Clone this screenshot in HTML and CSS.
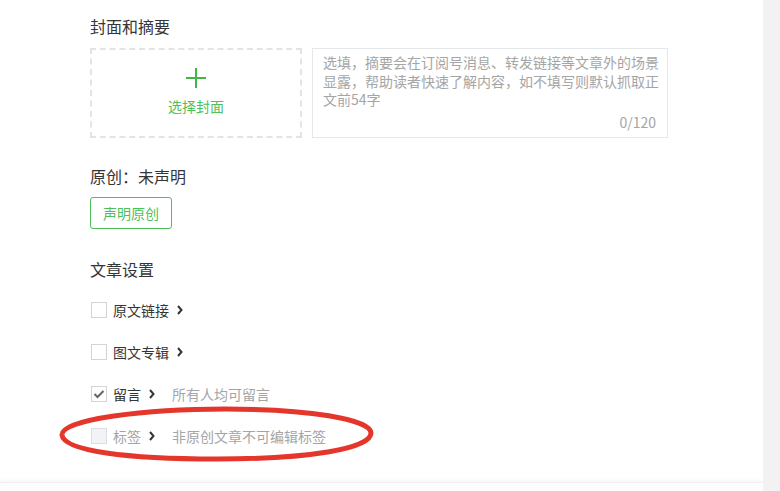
FILE: index.html
```html
<!DOCTYPE html>
<html lang="zh-CN">
<head>
<meta charset="utf-8">
<title>文章设置</title>
<link rel="stylesheet" href="styles.css">
</head>
<body>
<div class="page">
  <div class="main">
    <div class="content">
      <h3 class="sec-title">封面和摘要</h3>
      <div class="cover-row">
        <div class="cover-pick">
          <svg class="plus" width="20" height="20" viewBox="0 0 20 20"><path d="M10 0V20M0 10H20" stroke="#44b549" stroke-width="2" fill="none"/></svg>
          <span class="cover-text">选择封面</span>
        </div>
        <div class="digest">
          <p class="digest-ph">选填，摘要会在订阅号消息、转发链接等文章外的场景显露，帮助读者快速了解内容，如不填写则默认抓取正文前54字</p>
          <span class="digest-count">0/120</span>
        </div>
      </div>

      <h3 class="sec-title orig-title">原创：未声明</h3>
      <button class="btn-orig">声明原创</button>

      <h3 class="sec-title set-title">文章设置</h3>
      <ul class="settings">
        <li class="set-row">
          <span class="cb"></span>
          <span class="lbl">原文链接</span>
          <svg class="chev" width="6" height="10" viewBox="0 0 6 10"><path d="M1 1L4.5 5L1 9" stroke="#353535" stroke-width="2" fill="none"/></svg>
        </li>
        <li class="set-row">
          <span class="cb"></span>
          <span class="lbl">图文专辑</span>
          <svg class="chev" width="6" height="10" viewBox="0 0 6 10"><path d="M1 1L4.5 5L1 9" stroke="#353535" stroke-width="2" fill="none"/></svg>
        </li>
        <li class="set-row">
          <span class="cb cb-checked"><svg width="12" height="10" viewBox="0 0 12 10"><path d="M1.5 5L4.5 8L10.5 2" stroke="#666" stroke-width="2" fill="none"/></svg></span>
          <span class="lbl">留言</span>
          <svg class="chev" width="6" height="10" viewBox="0 0 6 10"><path d="M1 1L4.5 5L1 9" stroke="#353535" stroke-width="2" fill="none"/></svg>
          <span class="desc">所有人均可留言</span>
        </li>
        <li class="set-row disabled">
          <span class="cb cb-disabled"></span>
          <span class="lbl">标签</span>
          <svg class="chev" width="6" height="10" viewBox="0 0 6 10"><path d="M1 1L4.5 5L1 9" stroke="#353535" stroke-width="2" fill="none"/></svg>
          <span class="desc">非原创文章不可编辑标签</span>
          <svg class="mark" width="320" height="58" viewBox="0 0 320 58"><path d="M5 30 C 4 14, 90 4, 168 4 C 250 4, 314 14, 314 28 C 314 44, 250 54, 160 54 C 70 54, 7 46, 5 30 Z" stroke="#e5362c" stroke-width="5" fill="none"/></svg>
        </li>
      </ul>
    </div>
    <div class="footer"></div>
  </div>
  <div class="side"></div>
</div>
</body>
</html>
```

FILE: styles.css
```css
* { box-sizing: border-box; }
html, body { margin: 0; padding: 0; }
body {
  font-family: "Noto Sans CJK SC", "Liberation Sans", sans-serif;
  color: #353535;
  background: #f2f2f2;
}
.page {
  display: flex;
  height: 491px;
  overflow: hidden;
}
.main {
  width: 763px;
  background: #fff;
  display: flex;
  flex-direction: column;
  box-shadow: 1px 0 3px rgba(0,0,0,0.06);
}
.side { flex: 1; background: #f2f2f2; }
.content {
  flex: 1;
  padding: 14px 0 0 90px;
}
.footer {
  height: 9px;
  background: #fdfdfd;
  border-top: 1px solid #f0f0f0;
  box-shadow: 0 -2px 4px rgba(0,0,0,0.03);
}
.sec-title {
  margin: 0;
  font-size: 16px;
  font-weight: normal;
  line-height: 24px;
  color: #353535;
}
.cover-row {
  display: flex;
  gap: 10px;
  margin-top: 10px;
}
.cover-pick {
  width: 212px;
  height: 90px;
  border: 2px dashed #e4e4e4;
  display: flex;
  flex-direction: column;
  align-items: center;
  padding-top: 18px;
}
.plus { display: block; }
.cover-text {
  margin-top: 8px;
  font-size: 14px;
  line-height: 20px;
  color: #4fbf5a;
}
.digest {
  width: 356px;
  height: 90px;
  border: 1px solid #e4e8eb;
  padding: 4px 4px 0 10px;
  display: flex;
  flex-direction: column;
}
.digest-ph {
  margin: 0;
  font-size: 14px;
  line-height: 18.5px;
  color: #a5a5a5;
  flex: 1;
}
.digest-count {
  align-self: flex-end;
  font-size: 14px;
  line-height: 20px;
  color: #a5a5a5;
  margin: 0 7px 5px 0;
}
.orig-title { margin-top: 26px; }
.btn-orig {
  display: block;
  margin-top: 9px;
  width: 82px;
  height: 32px;
  padding: 0;
  border: 1px solid #4fbf5a;
  border-radius: 3px;
  background: #fff;
  color: #4fbf5a;
  font-family: inherit;
  font-size: 14px;
}
.set-title { margin-top: 28px; }
.settings {
  list-style: none;
  margin: 8px 0 0;
  padding: 0;
}
.set-row {
  position: relative;
  display: flex;
  align-items: center;
  height: 42px;
  font-size: 14px;
}
.cb {
  width: 16px;
  height: 16px;
  margin-left: 1px;
  border: 1px solid #d4d4d4;
  background: #fff;
  display: flex;
  align-items: center;
  justify-content: center;
}
.cb-disabled { background: #f1f3f7; border-color: #dcdee3; }
.lbl { margin-left: 6px; line-height: 20px; }
.chev { margin-left: 8px; }
.desc { margin-left: 17px; color: #a5a5a5; }
.disabled .lbl { color: #a5a5a5; }
.mark {
  position: absolute;
  left: -33px;
  top: -10px;
  pointer-events: none;
}
```
